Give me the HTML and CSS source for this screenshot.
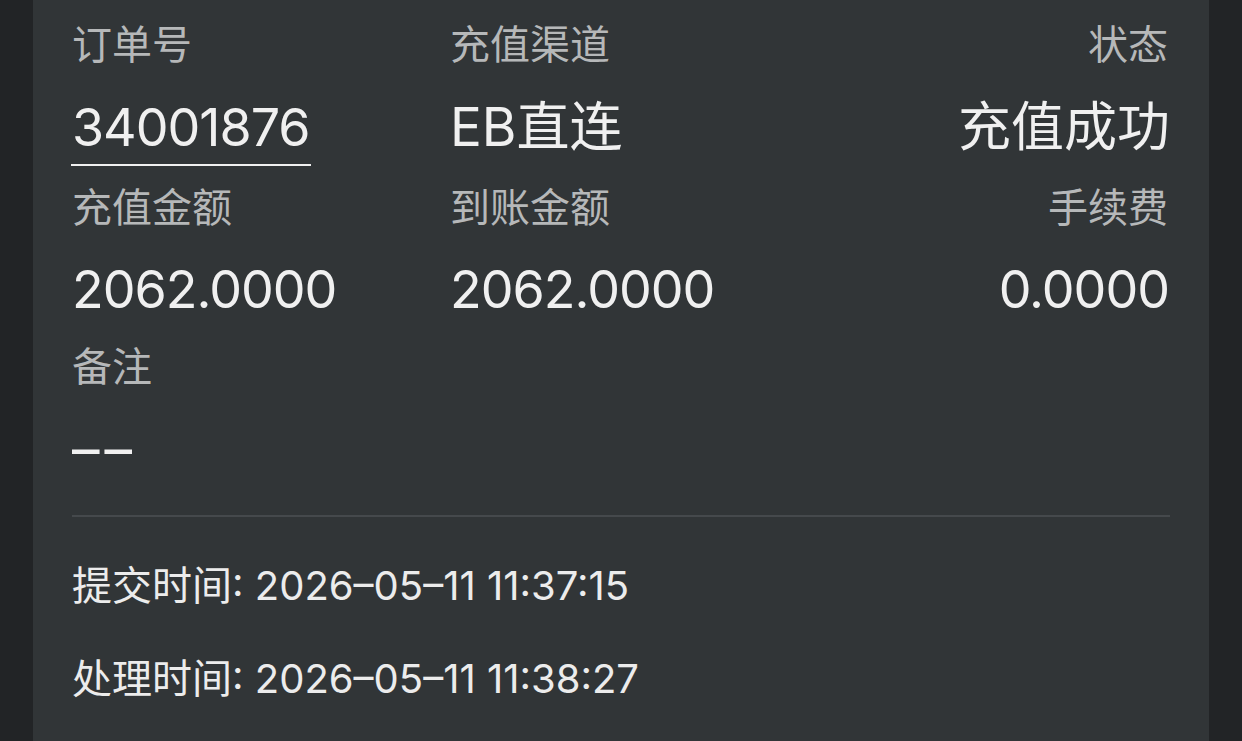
FILE: index.html
```html
<!DOCTYPE html>
<html lang="zh-CN">
<head>
    <meta charset="UTF-8">
    <meta name="viewport" content="width=device-width, initial-scale=1.0">
    <title>充值详情</title>
    <link rel="stylesheet" href="styles.css">
</head>
<body>
    <div class="card">
        <div class="info-grid">
            <div class="cell">
                <div class="label">订单号</div>
                <div class="value num"><span class="order-no">34001876</span></div>
            </div>
            <div class="cell">
                <div class="label">充值渠道</div>
                <div class="value">EB直连</div>
            </div>
            <div class="cell right">
                <div class="label">状态</div>
                <div class="value">充值成功</div>
            </div>

            <div class="cell">
                <div class="label">充值金额</div>
                <div class="value num">2062.0000</div>
            </div>
            <div class="cell">
                <div class="label">到账金额</div>
                <div class="value num">2062.0000</div>
            </div>
            <div class="cell right">
                <div class="label">手续费</div>
                <div class="value num">0.0000</div>
            </div>

            <div class="cell">
                <div class="label">备注</div>
                <div class="value empty">––</div>
            </div>
        </div>

        <div class="divider"></div>

        <div class="times">
            <div class="time-row">提交时间: 2026–05–11 11:37:15</div>
            <div class="time-row">处理时间: 2026–05–11 11:38:27</div>
        </div>
    </div>
</body>
</html>
```

FILE: styles.css
```css
body {
    margin: 0;
    padding: 0;
    background-color: #222426;
    font-family: Inter, "Noto Sans CJK SC", sans-serif;
    overflow: hidden;
}

.card {
    margin: 0 33px;
    padding: 20px 39px 40px;
    min-height: 741px;
    box-sizing: border-box;
    background-color: #313537;
}

.info-grid {
    display: grid;
    grid-template-columns: 378px 1fr 1fr;
    row-gap: 17px;
}

.cell.right {
    text-align: right;
    padding-right: 2px;
}

.label {
    font-size: 40px;
    line-height: 50px;
    color: #b6b8b9;
    margin-bottom: 22px;
}

.value {
    font-size: 53px;
    line-height: 70px;
    color: #f0f0f0;
}

.cell.right .value {
    margin-right: -2px;
}

.value.num {
    font-size: 52px;
    letter-spacing: -1px;
}

.cell.right .value.num {
    margin-right: -1px;
}

.value.empty {
    font-size: 55px;
    letter-spacing: 5px;
}

.order-no {
    display: inline-block;
    line-height: 72px;
    border-bottom: 2px solid #f0f0f0;
    padding: 0 1px;
    margin-left: -1px;
}

.divider {
    height: 2px;
    background-color: #45494c;
    margin-top: 31px;
}

.times {
    padding-top: 22px;
}

.time-row {
    font-size: 40px;
    line-height: 93px;
    color: #ececec;
}
```
